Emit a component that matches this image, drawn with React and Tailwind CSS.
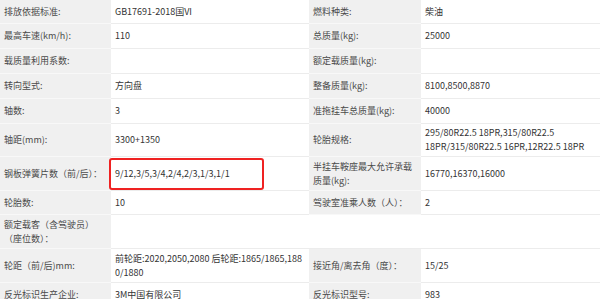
import React from "react";

const rows = [
  {
    h: "h-[24px]",
    l1: "排放依据标准:",
    v1: "GB17691-2018国VI",
    l2: "燃料种类:",
    v2: "柴油"
  },
  {
    h: "h-[25px]",
    l1: "最高车速(km/h):",
    v1: "110",
    l2: "总质量(kg):",
    v2: "25000"
  },
  {
    h: "h-[25px]",
    l1: "载质量利用系数:",
    v1: "",
    l2: "额定载质量(kg):",
    v2: ""
  },
  {
    h: "h-[25px]",
    l1: "转向型式:",
    v1: "方向盘",
    l2: "整备质量(kg):",
    v2: "8100,8500,8870"
  },
  {
    h: "h-[25px]",
    l1: "轴数:",
    v1: "3",
    l2: "准拖挂车总质量(kg):",
    v2: "40000"
  },
  {
    h: "h-[33px]",
    l1: "轴距(mm):",
    v1: "3300+1350",
    l2: "轮胎规格:",
    v2: ["295/80R22.5 18PR,315/80R22.5", "18PR/315/80R22.5 16PR,12R22.5 18PR"]
  },
  {
    h: "h-[34px]",
    l1: "钢板弹簧片数（前/后）：",
    v1: "9/12,3/5,3/4,2/4,2/3,1/3,1/1",
    mark: true,
    l2: "半挂车鞍座最大允许承载质量(kg):",
    v2: "16770,16370,16000"
  },
  {
    h: "h-[24px]",
    l1: "轮胎数:",
    v1: "10",
    l2: "驾驶室准乘人数（人）：",
    v2: "2"
  },
  {
    h: "h-[34px]",
    l1: "额定载客（含驾驶员）（座位数）：",
    v1: "",
    blank: true
  },
  {
    h: "h-[34px]",
    l1: "轮距（前/后)mm:",
    v1: ["前轮距:2020,2050,2080 后轮距:1865/1865,188", "0/1880"],
    l2: "接近角/离去角（度）：",
    v2: "15/25"
  },
  {
    h: "h-[25px]",
    l1: "反光标识生产企业:",
    v1: "3M中国有限公司",
    l2: "反光标识型号:",
    v2: "983"
  }
];

function Value({ text }) {
  if (Array.isArray(text)) {
    return (
      <div>
        {text.map((line) => (
          <div key={line} className="whitespace-nowrap">
            {line}
          </div>
        ))}
      </div>
    );
  }
  return <div>{text}</div>;
}

function Label({ text, h }) {
  return (
    <div
      className={`${h} flex items-center pl-[4px] pr-[4px] bg-[#f0f0f0] border-b border-[#f8f8f8] text-[#4a4a4a]`}
    >
      <div>{text}</div>
    </div>
  );
}

function Cell({ text, h, mark }) {
  return (
    <div
      className={`${h} relative flex items-center pl-[4px] pr-[2px] bg-white border-b border-[#ececec] text-[#333]`}
    >
      <Value text={text} />
      {mark && (
        <div className="absolute left-[-2px] top-[1px] w-[155px] h-[32px] border-2 border-[#ef2222] rounded-[3px]" />
      )}
    </div>
  );
}

export default function App() {
  return (
    <div
      className="w-[600px] h-[299px] overflow-hidden bg-white text-[9px] leading-[14px]"
      style={{ fontFamily: '"Noto Sans CJK SC", "Noto Sans", sans-serif' }}
    >
      <div className="grid grid-cols-[111px_198px_112px_1fr]">
        {rows.map((r, i) => (
          <React.Fragment key={i}>
            <Label text={r.l1} h={r.h} />
            <Cell text={r.v1} h={r.h} mark={r.mark} />
            {r.blank ? (
              <div className={`${r.h} col-span-2 bg-white border-b border-[#ececec]`} />
            ) : (
              <>
                <Label text={r.l2} h={r.h} />
                <Cell text={r.v2} h={r.h} />
              </>
            )}
          </React.Fragment>
        ))}
      </div>
    </div>
  );
}
